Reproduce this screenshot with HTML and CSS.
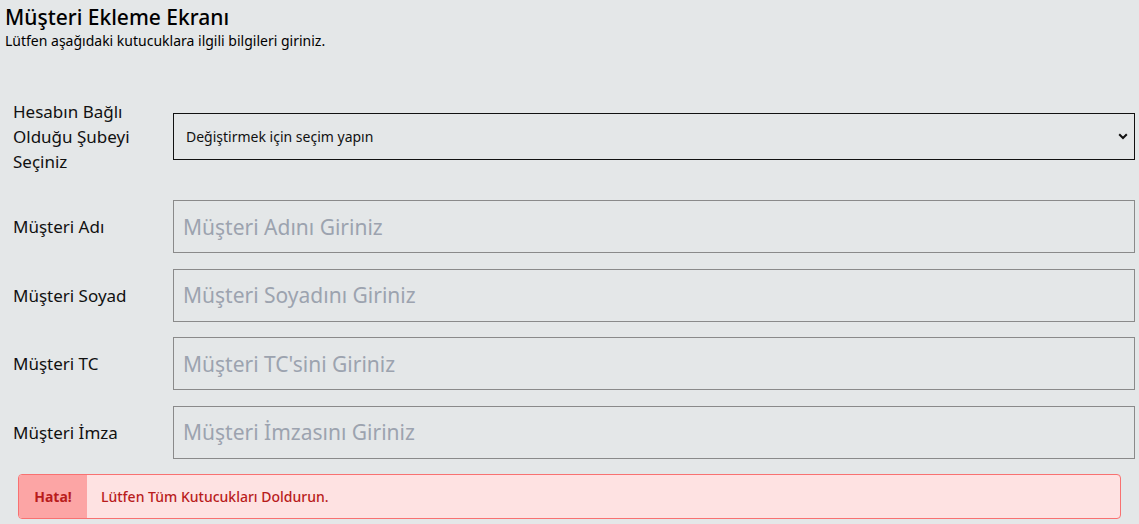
FILE: index.html
```html
<!DOCTYPE html>
<html lang="tr">
<head>
<meta charset="utf-8">
<link rel="stylesheet" href="styles.css">
</head>
<body>
<div class="page">
  <header class="head">
    <h1 class="title">Müşteri Ekleme Ekranı</h1>
    <p class="subtitle">Lütfen aşağıdaki kutucuklara ilgili bilgileri giriniz.</p>
  </header>
  <form class="form">
    <div class="row row-select">
      <label class="label">Hesabın Bağlı Olduğu Şubeyi Seçiniz</label>
      <div class="select">
        <span>Değiştirmek için seçim yapın</span>
        <svg class="chev" width="10" height="7" viewBox="0 0 10 7"><path d="M1.2 1.2 L5 5 L8.8 1.2" fill="none" stroke="#111" stroke-width="2"/></svg>
      </div>
    </div>
    <div class="row">
      <label class="label">Müşteri Adı</label>
      <input class="input" placeholder="Müşteri Adını Giriniz">
    </div>
    <div class="row">
      <label class="label">Müşteri Soyad</label>
      <input class="input" placeholder="Müşteri Soyadını Giriniz">
    </div>
    <div class="row">
      <label class="label">Müşteri TC</label>
      <input class="input" placeholder="Müşteri TC'sini Giriniz">
    </div>
    <div class="row">
      <label class="label">Müşteri İmza</label>
      <input class="input" placeholder="Müşteri İmzasını Giriniz">
    </div>
  </form>
  <div class="alert">
    <div class="alert-tag">Hata!</div>
    <div class="alert-msg">Lütfen Tüm Kutucukları Doldurun.</div>
  </div>
</div>
</body>
</html>
```

FILE: styles.css
```css
* { box-sizing: border-box; }
html, body { margin: 0; padding: 0; }
body {
  background: #e4e7e8;
  font-family: "Noto Sans", "Open Sans", sans-serif;
  color: #111;
}
.page { padding: 3px 4px 0 5px; }
.head { margin: 0; }
.title {
  margin: 0;
  font-size: 21px;
  font-weight: 500;
  line-height: 28px;
  color: #000;
}
.subtitle {
  margin: 0;
  font-size: 14px;
  line-height: 20px;
  color: #000;
}
.form { padding: 48px 0 0 8px; }
.row {
  display: flex;
  align-items: center;
  margin-bottom: 15.5px;
}
.row-select { margin-bottom: 26px; }
.label {
  width: 160px;
  flex: none;
  font-size: 17px;
  line-height: 25px;
  color: #111;
  padding-right: 20px;
}
.select {
  flex: 1;
  height: 47px;
  border: 1px solid #111;
  display: flex;
  align-items: center;
  justify-content: space-between;
  padding: 0 6px 0 12px;
  font-size: 14px;
  color: #111;
}
.chev { display: block; }
.input {
  flex: 1;
  height: 53px;
  border: 1px solid #8a8a8a;
  background: transparent;
  padding: 0 9px;
  font-family: inherit;
  font-size: 21px;
  color: #111;
  outline: none;
  margin: 0;
}
.input::placeholder { color: #9ca3af; }
.alert {
  margin: 2.5px 14px 0 13px;
  display: flex;
  height: 45px;
  border: 1px solid #f87171;
  border-radius: 4px;
  background: #fee2e2;
  overflow: hidden;
}
.alert-tag {
  width: 68px;
  background: #fca5a5;
  color: #b91c1c;
  font-weight: 700;
  font-size: 14px;
  display: flex;
  align-items: center;
  justify-content: center;
}
.alert-msg {
  display: flex;
  align-items: center;
  padding-left: 14px;
  color: #b91c1c;
  font-size: 14px;
  font-weight: 500;
}
```
